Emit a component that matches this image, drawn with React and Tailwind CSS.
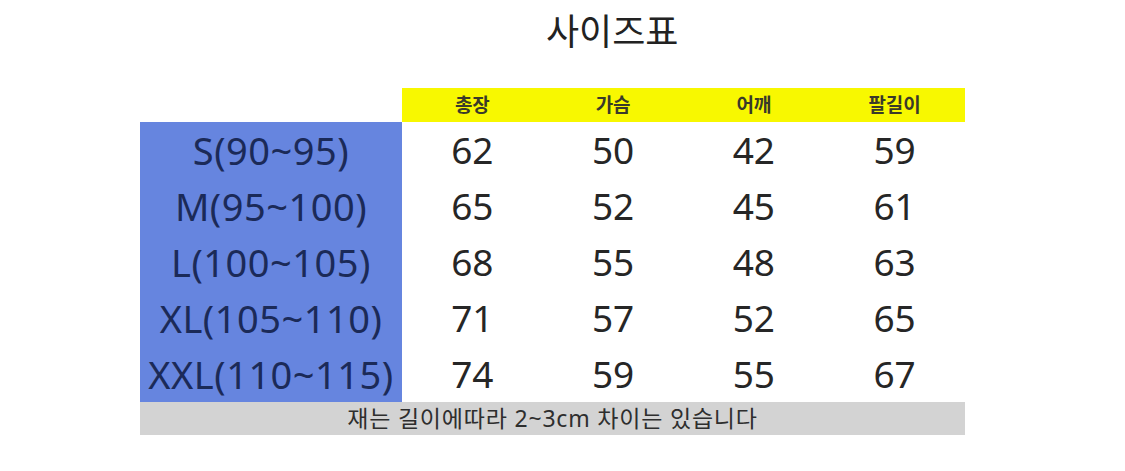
const HEAD = ['총장', '가슴', '어깨', '팔길이'];

const ROWS = [
  { size: 'S(90~95)', v: [62, 50, 42, 59] },
  { size: 'M(95~100)', v: [65, 52, 45, 61] },
  { size: 'L(100~105)', v: [68, 55, 48, 63] },
  { size: 'XL(105~110)', v: [71, 57, 52, 65] },
  { size: 'XXL(110~115)', v: [74, 59, 55, 67] },
];

const font = { fontFamily: '"Noto Sans", "Noto Sans CJK KR", sans-serif' };

export default function App() {
  return (
    <div className="w-[1125px] h-[471px] bg-white overflow-hidden" style={font}>
      <div className="h-[88px] pl-[546px] pt-[8px]">
        <h1 className="text-[36px] leading-[48px] text-[#222]">사이즈표</h1>
      </div>

      <div className="ml-[140px] w-[825px] grid grid-cols-[262px_repeat(4,1fr)]">
        <div className="h-[34px]" />
        {HEAD.map((h) => (
          <div key={h} className="h-[34px] bg-[#f8f800] flex items-center justify-center text-[19px] font-semibold text-[#3a3a2a]">
            {h}
          </div>
        ))}

        {ROWS.map(({ size, v }) => (
          <div key={size} className="contents">
            <div className="h-[56px] bg-[#6685df] flex items-center justify-center text-[38px] text-[#1b2a58] tracking-[0.5px]">
              {size}
            </div>
            {v.map((n, i) => (
              <div key={i} className="h-[56px] flex items-center justify-center text-[37px] text-[#262626]">
                {n}
              </div>
            ))}
          </div>
        ))}

        <div className="col-span-5 h-[33px] bg-[#d3d3d3] flex items-center justify-center text-[23px] text-[#2e2e2e] tracking-[0.8px]">
          재는 길이에따라 2~3cm 차이는 있습니다
        </div>
      </div>
    </div>
  );
}
